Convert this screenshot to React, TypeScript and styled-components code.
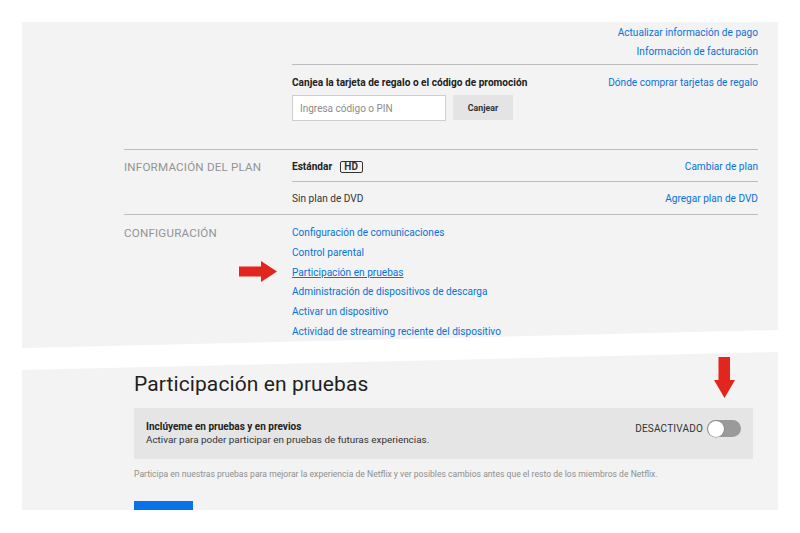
import { createGlobalStyle, styled } from "styled-components";

const GlobalStyle = createGlobalStyle`
  html, body {
    margin: 0;
    padding: 0;
    background: #ffffff;
  }
  body {
    font-family: "Roboto", "Liberation Sans", sans-serif;
    color: #333333;
  }
`;

const LINK = "#0a71d8";

function RightArrow() {
  return (
    <svg width="38" height="21" viewBox="0 0 38 21">
      <path d="M0 5.5 H22 V0 L38 10.5 L22 21 V15.5 H0 Z" fill="#e2261e" />
    </svg>
  );
}

function DownArrow() {
  return (
    <svg width="21" height="41" viewBox="0 0 21 41">
      <path d="M4.5 0 H16 V23 H21 L10.5 41 L0 23 H4.5 Z" fill="#e2261e" />
    </svg>
  );
}

export default function App() {
  return (
    <Page>
      <GlobalStyle />
      <TopPanel>
        <Section $noBorder>
          <Label />
          <Content>
            <Row $first $pad="1px 0 3px">
              <RightLinks>
                <Link>Actualizar información de pago</Link>
                <Link>Información de facturación</Link>
              </RightLinks>
            </Row>
            <Row $pad="10px 0 28px">
              <Split>
                <div>
                  <Strong>Canjea la tarjeta de regalo o el código de promoción</Strong>
                  <GiftForm>
                    <CodeInput placeholder="Ingresa código o PIN" />
                    <GrayButton>Canjear</GrayButton>
                  </GiftForm>
                </div>
                <Link>Dónde comprar tarjetas de regalo</Link>
              </Split>
            </Row>
          </Content>
        </Section>

        <Section>
          <Label $top="9px">Información del plan</Label>
          <Content>
            <Row $first $pad="9px 0 6px">
              <Split>
                <PlanName>
                  <Strong>Estándar</Strong>
                  <HdBadge>HD</HdBadge>
                </PlanName>
                <Link>Cambiar de plan</Link>
              </Split>
            </Row>
            <Row $pad="9px 0 7px">
              <Split>
                <Plain>Sin plan de DVD</Plain>
                <Link>Agregar plan de DVD</Link>
              </Split>
            </Row>
          </Content>
        </Section>

        <Section>
          <Label $top="10px">Configuración</Label>
          <Content>
            <LinkList>
              <Link>Configuración de comunicaciones</Link>
              <Link>Control parental</Link>
              <Link $underline>Participación en pruebas</Link>
              <Link>Administración de dispositivos de descarga</Link>
              <Link>Activar un dispositivo</Link>
              <Link>Actividad de streaming reciente del dispositivo</Link>
            </LinkList>
          </Content>
        </Section>
      </TopPanel>

      <BottomPanel>
        <Title>Participación en pruebas</Title>
        <OptionBox>
          <OptionText>
            <OptionTitle>Inclúyeme en pruebas y en previos</OptionTitle>
            <OptionDesc>Activar para poder participar en pruebas de futuras experiencias.</OptionDesc>
          </OptionText>
          <ToggleGroup>
            <ToggleLabel>DESACTIVADO</ToggleLabel>
            <Toggle>
              <Knob />
            </Toggle>
          </ToggleGroup>
        </OptionBox>
        <Note>
          Participa en nuestras pruebas para mejorar la experiencia de Netflix y ver posibles cambios antes que el resto de los miembros de Netflix.
        </Note>
        <BlueButton aria-label="Listo" />
      </BottomPanel>

      <ArrowMark $x={239} $y={261}>
        <RightArrow />
      </ArrowMark>
      <ArrowMark $x={714} $y={357}>
        <DownArrow />
      </ArrowMark>
    </Page>
  );
}

const Page = styled.div`
  position: relative;
  width: 800px;
  height: 533px;
  padding: 22px 22px 0;
  box-sizing: border-box;
  overflow: hidden;
`;

const TopPanel = styled.div`
  background: #f3f3f3;
  height: 326px;
  padding: 0 20px 0 102px;
  box-sizing: border-box;
  clip-path: polygon(0 0, 100% 0, 100% calc(100% - 18px), 0 100%);
`;

const Section = styled.div<{ $noBorder?: boolean }>`
  display: grid;
  grid-template-columns: 168px 1fr;
  border-top: ${(p) => (p.$noBorder ? "none" : "1px solid #bcbcbc")};
`;

const Label = styled.div<{ $top?: string }>`
  padding-top: ${(p) => p.$top || "0"};
  font-size: 11.6px;
  line-height: 16px;
  text-transform: uppercase;
  color: #939393;
  letter-spacing: 0.2px;
`;

const Content = styled.div`
  display: flex;
  flex-direction: column;
`;

const Row = styled.div<{ $first?: boolean; $pad: string }>`
  padding: ${(p) => p.$pad};
  border-top: ${(p) => (p.$first ? "none" : "1px solid #bcbcbc")};
`;

const Split = styled.div`
  display: flex;
  justify-content: space-between;
  align-items: flex-start;
`;

const RightLinks = styled.div`
  display: flex;
  flex-direction: column;
  align-items: flex-end;
  line-height: 19px;
`;

const Link = styled.a<{ $underline?: boolean }>`
  font-size: 10.1px;
  line-height: 16px;
  color: ${LINK};
  text-decoration: ${(p) => (p.$underline ? "underline" : "none")};
  white-space: nowrap;
  ${RightLinks} & {
    line-height: 19px;
  }
`;

const Strong = styled.div`
  font-size: 10.1px;
  line-height: 16px;
  font-weight: 700;
  color: #222;
`;

const Plain = styled.div`
  font-size: 10.1px;
  line-height: 16px;
  color: #333;
`;

const GiftForm = styled.div`
  display: flex;
  align-items: flex-start;
  gap: 7px;
  margin-top: 4px;
`;

const CodeInput = styled.input`
  width: 154px;
  height: 26px;
  box-sizing: border-box;
  border: 1px solid #cfcfcf;
  background: #fff;
  padding: 0 7px;
  font-family: inherit;
  font-size: 10px;
  outline: none;
  &::placeholder {
    color: #8c8c8c;
  }
`;

const GrayButton = styled.button`
  width: 60px;
  height: 25px;
  border: none;
  background: #e4e4e4;
  font-family: inherit;
  font-size: 8.8px;
  font-weight: 700;
  color: #333;
  padding: 0;
`;

const PlanName = styled.div`
  display: flex;
  align-items: center;
  gap: 8px;
`;

const HdBadge = styled.span`
  display: inline-block;
  border: 1.5px solid #333;
  border-radius: 2px;
  padding: 0 3px;
  font-size: 10px;
  line-height: 10px;
  font-weight: 700;
  color: #333;
  letter-spacing: 0.4px;
`;

const LinkList = styled.div`
  display: flex;
  flex-direction: column;
  align-items: flex-start;
  padding-top: 8px;
  & > a {
    line-height: 19.8px;
  }
`;

const BottomPanel = styled.div`
  margin-top: 4px;
  height: 158px;
  background: #f3f3f3;
  padding: 19px 25px 0 112px;
  box-sizing: border-box;
  overflow: hidden;
  clip-path: polygon(0 18px, 100% 0, 100% 100%, 0 100%);
`;

const Title = styled.h1`
  margin: 0;
  font-size: 21px;
  line-height: 26px;
  font-weight: 400;
  color: #1f1f1f;
  letter-spacing: 0.1px;
`;

const OptionBox = styled.div`
  margin-top: 11px;
  height: 51px;
  box-sizing: border-box;
  background: #e5e5e5;
  padding: 12px 12px 0 12px;
  display: flex;
  justify-content: space-between;
  align-items: flex-start;
`;

const OptionText = styled.div`
  display: flex;
  flex-direction: column;
`;

const OptionTitle = styled.div`
  font-size: 10px;
  line-height: 13px;
  font-weight: 700;
  color: #222;
`;

const OptionDesc = styled.div`
  font-size: 9.9px;
  line-height: 13px;
  color: #333;
`;

const ToggleGroup = styled.div`
  display: flex;
  align-items: center;
  gap: 4px;
`;

const ToggleLabel = styled.span`
  font-size: 10px;
  color: #333;
  letter-spacing: 0.2px;
`;

const Toggle = styled.div`
  width: 34px;
  height: 17px;
  border-radius: 9px;
  background: #9a9a9a;
  display: flex;
  align-items: center;
  padding: 0 1px;
  box-sizing: border-box;
`;

const Knob = styled.div`
  width: 16px;
  height: 16px;
  border-radius: 50%;
  background: #fff;
  box-shadow: 0 0 0 0.5px #777;
`;

const Note = styled.p`
  margin: 9px 0 0;
  font-size: 8.6px;
  line-height: 12px;
  color: #8f8f8f;
`;

const BlueButton = styled.button`
  display: block;
  margin-top: 21px;
  width: 59px;
  height: 36px;
  border: none;
  background: #0a72e8;
`;

const ArrowMark = styled.div<{ $x: number; $y: number }>`
  position: absolute;
  left: ${(p) => p.$x}px;
  top: ${(p) => p.$y}px;
  line-height: 0;
`;
